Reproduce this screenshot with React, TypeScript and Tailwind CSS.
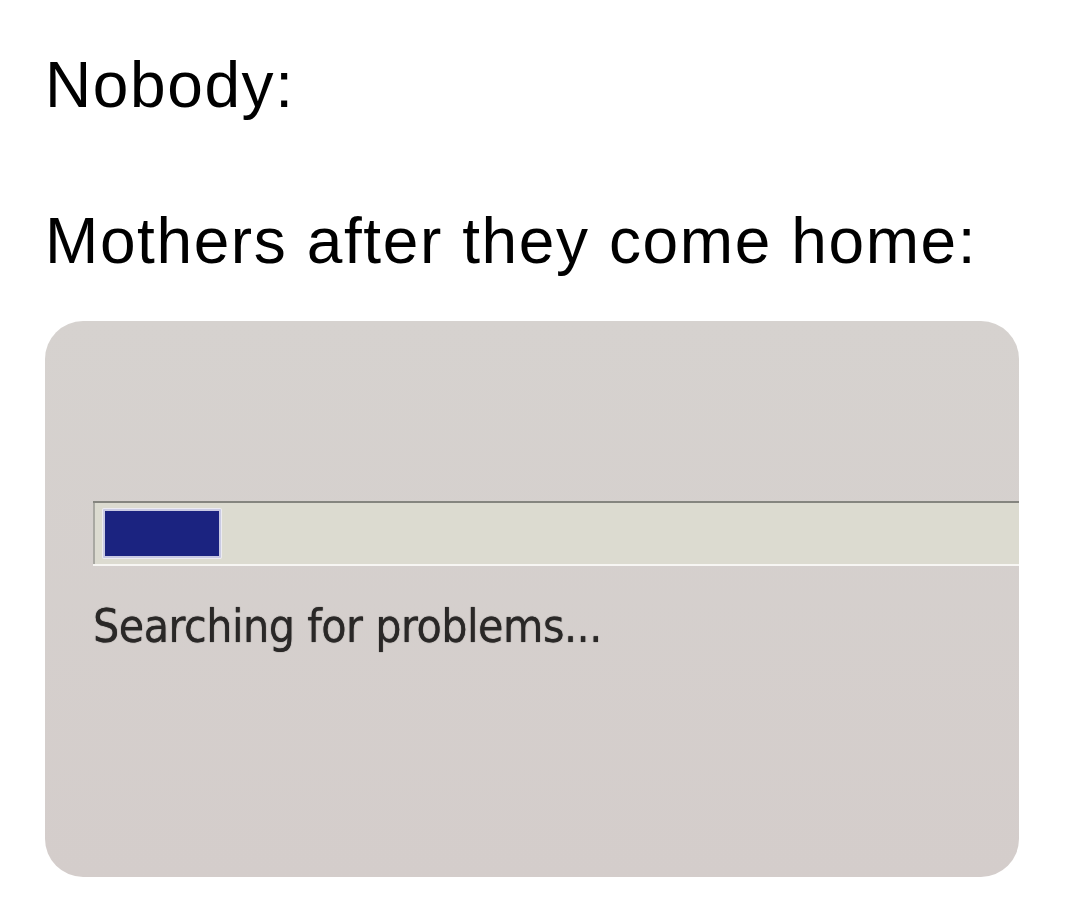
export default function App() {
  return (
    <div
      className="min-h-screen w-full bg-white pl-[45px] pt-[53px] text-black"
      style={{ fontFamily: "'Liberation Sans', Arial, sans-serif" }}
    >
      <p className="text-[64px] leading-[64px] tracking-[0.025em]">Nobody:</p>
      <p className="mt-[92px] text-[64px] leading-[64px] tracking-[0.025em]">Mothers after they come home:</p>

      <div className="mt-[48px] flex h-[556px] w-[974px] flex-col overflow-hidden rounded-[38px] bg-gradient-to-b from-[#d6d2cf] to-[#d4cdcb] pl-[48px] pt-[180px]">
        {/* progress bar, runs off the right edge */}
        <div className="flex h-[65px] flex-col">
          <div className="h-[2px] bg-[#85857f]" />
          <div className="flex flex-1 border-l-2 border-[#a9a8a2] bg-[#dcdbd0] pl-[8px] pt-[6px]">
            <div className="h-[49px] w-[118px] rounded-[1px] border-[2px] border-[#c9cae3] bg-[#1b2380] shadow-[0_0_0_1px_#ecebf2]" />
          </div>
          <div className="h-[2px] bg-[#f7f6f3]" />
        </div>

        <p
          className="mt-[37px] text-[46px] leading-[46px] tracking-[-0.5px] text-[#2a2827] blur-[0.5px] [text-shadow:0_0_1px_#2a2827]"
          style={{ fontFamily: "'DejaVu Sans Condensed', 'DejaVu Sans', sans-serif" }}
        >
          Searching for problems...
        </p>
      </div>
    </div>
  );
}
